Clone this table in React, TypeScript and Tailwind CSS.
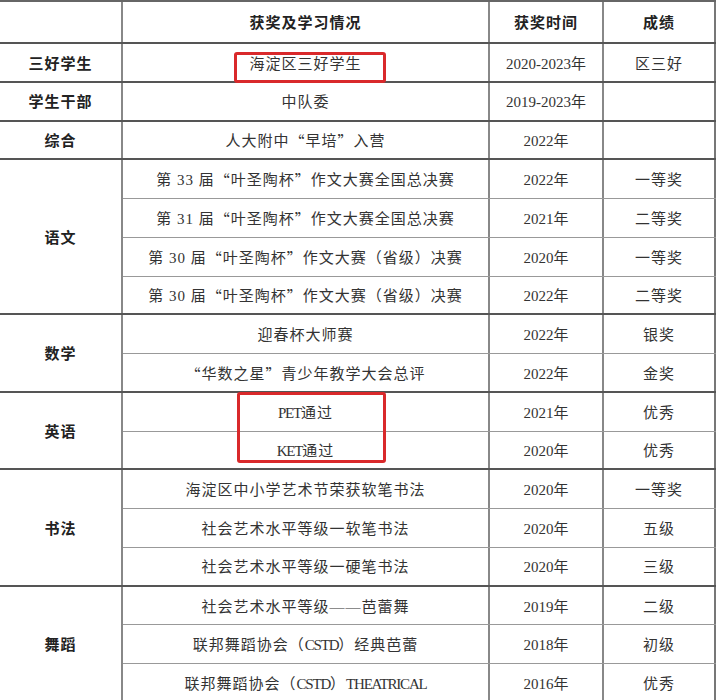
import React from "react";

type Row = [string, string, string];
type Group = { label: string; rows: Row[] };

const groups: Group[] = [
  { label: "三好学生", rows: [["海淀区三好学生", "2020-2023年", "区三好"]] },
  { label: "学生干部", rows: [["中队委", "2019-2023年", ""]] },
  { label: "综合", rows: [["人大附中“早培”入营", "2022年", ""]] },
  {
    label: "语文",
    rows: [
      ["第 33 届“叶圣陶杯”作文大赛全国总决赛", "2022年", "一等奖"],
      ["第 31 届“叶圣陶杯”作文大赛全国总决赛", "2021年", "二等奖"],
      ["第 30 届“叶圣陶杯”作文大赛（省级）决赛", "2020年", "一等奖"],
      ["第 30 届“叶圣陶杯”作文大赛（省级）决赛", "2022年", "二等奖"],
    ],
  },
  {
    label: "数学",
    rows: [
      ["迎春杯大师赛", "2022年", "银奖"],
      ["“华数之星”青少年教学大会总评", "2022年", "金奖"],
    ],
  },
  {
    label: "英语",
    rows: [
      ["PET通过", "2021年", "优秀"],
      ["KET通过", "2020年", "优秀"],
    ],
  },
  {
    label: "书法",
    rows: [
      ["海淀区中小学艺术节荣获软笔书法", "2020年", "一等奖"],
      ["社会艺术水平等级一软笔书法", "2020年", "五级"],
      ["社会艺术水平等级一硬笔书法", "2020年", "三级"],
    ],
  },
  {
    label: "舞蹈",
    rows: [
      ["社会艺术水平等级——芭蕾舞", "2019年", "二级"],
      ["联邦舞蹈协会（CSTD）经典芭蕾", "2018年", "初级"],
      ["联邦舞蹈协会（CSTD）THEATRICAL", "2016年", "优秀"],
    ],
  },
];

const RH = 38.75;

function Text({ s }: { s: string }) {
  const parts = s.split(/([“”]|[A-Z]+)/).filter((p) => p !== "");
  return (
    <>
      {parts.map((p, i) =>
        p === "“" || p === "”" ? (
          <span
            key={i}
            className="inline-block w-[16px]"
            style={{ fontFamily: '"Noto Sans CJK SC", sans-serif', textAlign: p === "“" ? "right" : "left" }}
          >
            {p}
          </span>
        ) : /^[A-Z]+$/.test(p) ? (
          <span key={i} className="tracking-[-1.2px]">
            {p}
          </span>
        ) : (
          <span key={i}>{p}</span>
        )
      )}
    </>
  );
}

export default function App() {
  return (
    <div
      className="relative w-[720px] h-[700px] overflow-hidden bg-white text-[#333] text-[15px] tracking-[1px]"
      style={{ fontFamily: '"Liberation Serif", "Noto Sans CJK SC", serif' }}
    >
      <div className="w-[716px] border-t-2 border-[#666]">
        <div className="flex h-[42px] border-b-2 border-[#555]">
          <div className="w-[123px] border-r-2 border-[#888]" />
          <div className="w-[367px] border-r-2 border-[#888] flex items-center justify-center pt-[2px] font-bold text-[#222]">
            获奖及学习情况
          </div>
          <div className="w-[114px] border-r-2 border-[#888] flex items-center justify-center pt-[2px] font-bold text-[#222]">
            获奖时间
          </div>
          <div className="w-[112px] border-r-2 border-[#777] flex items-center justify-center pt-[2px] font-bold text-[#222]">
            成绩
          </div>
        </div>
        {groups.map((g) => (
          <div key={g.label} className="flex border-b-2 border-[#555]">
            <div className="w-[123px] border-r-2 border-[#888] flex items-center justify-center pt-[3px] font-bold text-[#222]">
              {g.label}
            </div>
            <div className="flex-1 flex flex-col">
              {g.rows.map((r, i) => (
                <div
                  key={i}
                  className={"flex " + (i < g.rows.length - 1 ? "border-b border-[#999]" : "")}
                  style={{ height: i < g.rows.length - 1 ? RH : RH - 2 }}
                >
                  <div className="w-[367px] border-r-2 border-[#888] flex items-center justify-center pt-[3px] whitespace-nowrap">
                    <Text s={r[0]} />
                  </div>
                  <div className="w-[114px] border-r-2 border-[#888] flex items-center justify-center pt-[3px] tracking-normal">
                    {r[1]}
                  </div>
                  <div className="w-[112px] border-r-2 border-[#777] flex items-center justify-center pt-[3px]">
                    {r[2]}
                  </div>
                </div>
              ))}
            </div>
          </div>
        ))}
      </div>
      <div className="absolute left-[234px] top-[52px] w-[152px] h-[31px] border-[3px] border-[#d9292b] rounded-[3px]" />
      <div className="absolute left-[237px] top-[392px] w-[149px] h-[71px] border-[3px] border-[#d9292b] rounded-[3px]" />
    </div>
  );
}
